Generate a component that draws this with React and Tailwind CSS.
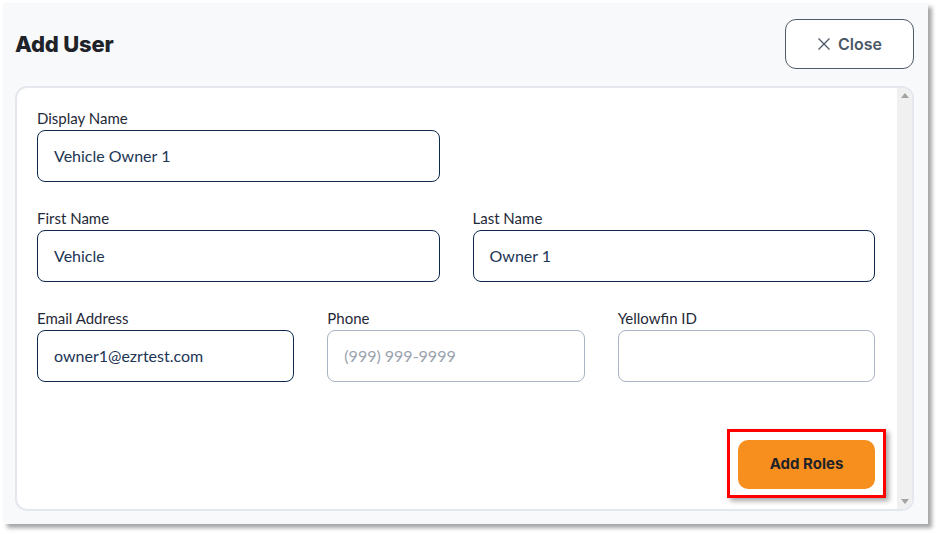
import React from 'react';

const font = { fontFamily: 'Lato, "Open Sans", sans-serif' };

const Field = ({ label, value, placeholder, active }) => (
  <div className="flex flex-col">
    <label className="text-[15px] leading-[18px] text-[#1f2937] mb-[3px]">{label}</label>
    <div
      className={`h-[52px] rounded-[8px] border bg-white flex items-center px-[16px] text-[16px] ${
        active ? 'border-[#0d2a4c] text-[#1c3554]' : 'border-[#a9b4c4] text-[#9aa3ae]'
      }`}
    >
      {value || placeholder}
    </div>
  </div>
);

export default function App() {
  return (
    <div className="w-[936px] h-[534px] bg-white pt-[3px] pl-[3px]" style={font}>
      <div className="w-[925px] h-[521px] bg-[#f8f9fb] shadow-[4px_4px_4px_rgba(0,0,0,0.35)] flex flex-col px-[12px]">
        <div className="w-[899px] flex items-center justify-between h-[82px]">
          <h1 className="text-[22px] font-extrabold text-[#1f2329] tracking-[-0.2px]" style={{ fontFamily: 'Inter, sans-serif' }}>
            Add User
          </h1>
          <button className="w-[129px] h-[50px] rounded-[11px] border border-[#4f5b69] bg-white flex items-center justify-center gap-[7px] text-[#4b5866] text-[16px] font-semibold" style={{ fontFamily: 'Inter, sans-serif' }}>
            <svg width="14" height="14" viewBox="0 0 14 14" fill="none" stroke="#4b5866" strokeWidth="1.3">
              <path d="M1.5 1.5l11 11M12.5 1.5l-11 11" />
            </svg>
            Close
          </button>
        </div>
        <div className="w-[899px] h-[425px] mt-[1px] bg-white border-2 border-[#e4e8ee] rounded-[12px] flex overflow-hidden">
          <div className="flex-1 flex flex-col pl-[20px] pr-[22px] pt-[21px] pb-[11px]">
            <div className="grid grid-cols-2 gap-x-[33px]">
              <Field label="Display Name" value="Vehicle Owner 1" active />
            </div>
            <div className="grid grid-cols-2 gap-x-[33px] mt-[27px]">
              <Field label="First Name" value="Vehicle" active />
              <Field label="Last Name" value="Owner 1" active />
            </div>
            <div className="grid grid-cols-3 gap-x-[33px] mt-[27px]">
              <Field label="Email Address" value="owner1@ezrtest.com" active />
              <Field label="Phone" placeholder="(999) 999-9999" />
              <Field label="Yellowfin ID" />
            </div>
            <div className="flex-1 flex items-end justify-end">
              <div className="border-[3px] border-[#ff0000] px-[8px] pt-[8px] pb-[6px] mr-[-11px] shadow-[3px_3px_5px_rgba(0,0,0,0.35)]">
                <button className="w-[137px] h-[49px] rounded-[10px] bg-[#f78f1e] text-[#1f2329] text-[15px] font-bold" style={{ fontFamily: 'Inter, sans-serif' }}>
                  Add Roles
                </button>
              </div>
            </div>
          </div>
          <div className="w-[15px] bg-[#f0f0f0] flex flex-col justify-between items-center py-[5px]">
            <svg width="8" height="5" viewBox="0 0 8 5"><path d="M0 5L4 0L8 5Z" fill="#a3a3a3" /></svg>
            <svg width="8" height="5" viewBox="0 0 8 5"><path d="M0 0L4 5L8 0Z" fill="#a3a3a3" /></svg>
          </div>
        </div>
      </div>
    </div>
  );
}
